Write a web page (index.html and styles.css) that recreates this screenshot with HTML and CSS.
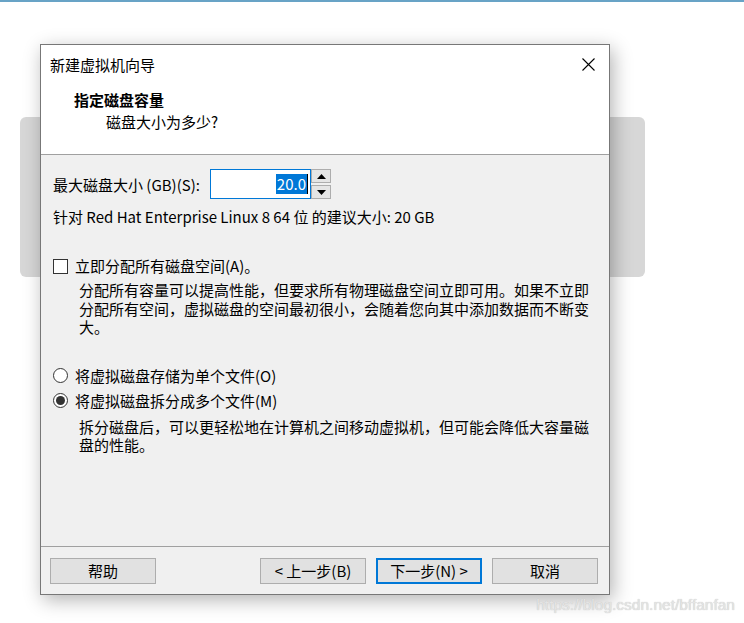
FILE: index.html
```html
<!DOCTYPE html>
<html lang="zh-CN">
<head>
  <meta charset="UTF-8">
  <title>新建虚拟机向导</title>
  <link rel="stylesheet" href="styles.css">
</head>
<body>

<div class="topline"></div>

<div class="stage">
  <div class="backdrop"></div>

  <div class="dialog">
    <div class="titlebar">
      <span>新建虚拟机向导</span>
      <svg class="close" width="13" height="13" viewBox="0 0 13 13">
        <path d="M0.5 0.5 L12.5 12.5 M12.5 0.5 L0.5 12.5" stroke="#000" stroke-width="1.1" fill="none"/>
      </svg>
    </div>

    <div class="header">
      <div class="header-title">指定磁盘容量</div>
      <div class="header-sub">磁盘大小为多少?</div>
    </div>

    <div class="content">
      <div class="size-row">
        <label>最大磁盘大小 (GB)(S):</label>
        <div class="spin">
          <div class="spin-input"><span class="sel">20.0</span><span class="caret"></span></div>
          <div class="spin-btns">
            <div class="spin-btn">
              <svg width="9" height="5" viewBox="0 0 9 5"><path d="M4.5 0 L9 5 L0 5 Z" fill="#000"/></svg>
            </div>
            <div class="spin-btn">
              <svg width="9" height="5" viewBox="0 0 9 5"><path d="M0 0 L9 0 L4.5 5 Z" fill="#000"/></svg>
            </div>
          </div>
        </div>
      </div>

      <p class="recommend">针对 Red Hat Enterprise Linux 8 64 位 的建议大小: 20 GB</p>

      <div class="option check-row">
        <span class="checkbox"></span>
        <span>立即分配所有磁盘空间(A)。</span>
      </div>
      <p class="desc">分配所有容量可以提高性能，但要求所有物理磁盘空间立即可用。如果不立即分配所有空间，虚拟磁盘的空间最初很小，会随着您向其中添加数据而不断变大。</p>

      <div class="option radio-first">
        <span class="radio"></span>
        <span>将虚拟磁盘存储为单个文件(O)</span>
      </div>
      <div class="option radio-second">
        <span class="radio checked"></span>
        <span>将虚拟磁盘拆分成多个文件(M)</span>
      </div>
      <p class="desc desc-split">拆分磁盘后，可以更轻松地在计算机之间移动虚拟机，但可能会降低大容量磁盘的性能。</p>
    </div>

    <div class="footer">
      <button class="btn">帮助</button>
      <div class="footer-right">
        <button class="btn">&lt; 上一步(B)</button>
        <button class="btn btn-default">下一步(N) &gt;</button>
        <button class="btn">取消</button>
      </div>
    </div>
  </div>
</div>

<div class="watermark">https://blog.csdn.net/bffanfan</div>

</body>
</html>
```

FILE: styles.css
```css
body {
  margin: 0;
  background-color: #fff;
  font-family: "Noto Sans CJK SC", "Noto Sans", sans-serif;
  font-size: 15px;
  color: #000;
  height: 623px;
  overflow: hidden;
  position: relative;
}

.topline {
  height: 2px;
  background-color: #68a3c6;
}

.stage {
  position: relative;
  padding-top: 42px;
  padding-left: 40px;
}

/* grey panel sitting behind the dialog */
.backdrop {
  position: absolute;
  left: 20px;
  top: 115px;
  width: 625px;
  height: 160px;
  border-radius: 6px;
  background-color: #d7d7d7;
}

.dialog {
  position: relative;
  width: 570px;
  height: 551px;
  box-sizing: border-box;
  border: 1px solid #777;
  background-color: #f0f0f0;
  box-shadow: 3px 5px 18px rgba(0, 0, 0, 0.3);
  display: flex;
  flex-direction: column;
}

.titlebar {
  height: 38px;
  background-color: #fff;
  display: flex;
  align-items: center;
  justify-content: space-between;
  padding: 0 14px 0 9px;
}

.header {
  box-sizing: border-box;
  background-color: #fff;
  border-bottom: 1px solid #a0a0a0;
  height: 72px;
  padding: 7px 0 0 33px;
}

.header-title {
  font-weight: bold;
  line-height: 20px;
}

.header-sub {
  line-height: 20px;
  margin-top: 2px;
  padding-left: 32px;
}

.content {
  height: 391px;
  box-sizing: border-box;
  padding: 14px 0 0 12px;
}

.size-row {
  display: flex;
  align-items: center;
  height: 30px;
}

.size-row label {
  width: 157px;
}

.spin {
  display: flex;
  height: 30px;
}

.spin-input {
  width: 101px;
  box-sizing: border-box;
  border: 1px solid #0078d7;
  background-color: #fff;
  display: flex;
  justify-content: flex-end;
  align-items: center;
  padding-right: 2px;
}

.sel {
  background-color: #0078d7;
  color: #fff;
  line-height: 20px;
  padding: 0 1px;
}

.caret {
  width: 1px;
  height: 20px;
  background-color: #000;
}

.spin-btns {
  width: 20px;
  display: flex;
  flex-direction: column;
  gap: 2px;
}

.spin-btn {
  flex: 1;
  border: 1px solid #adadad;
  background-color: #e5e5e5;
  display: flex;
  justify-content: center;
  align-items: center;
}

.recommend {
  margin: 8px 0 0;
  line-height: 20px;
}

.option {
  display: flex;
  align-items: center;
  gap: 7px;
  line-height: 20px;
}

.check-row {
  margin-top: 29px;
}

.radio-first {
  margin-top: 29px;
}

.radio-second {
  margin-top: 5px;
}

.checkbox {
  width: 15px;
  height: 15px;
  box-sizing: border-box;
  border: 1px solid #333;
  background-color: #fff;
}

.radio {
  width: 15px;
  height: 15px;
  box-sizing: border-box;
  border: 1px solid #333;
  border-radius: 50%;
  background-color: #fff;
  display: flex;
  justify-content: center;
  align-items: center;
}

.radio.checked::after {
  content: "";
  width: 9px;
  height: 9px;
  border-radius: 50%;
  background-color: #333;
}

.desc {
  margin: 5px 0 0 26px;
  width: 512px;
  line-height: 18.5px;
}

.desc-split {
  margin-top: 7px;
}

.footer {
  flex: 1;
  border-top: 1px solid #a0a0a0;
  display: flex;
  justify-content: space-between;
  align-items: flex-start;
  padding: 11px 11px 0 9px;
}

.footer-right {
  display: flex;
  gap: 10px;
}

.btn {
  width: 106px;
  height: 26px;
  box-sizing: border-box;
  border: 1px solid #adadad;
  background-color: #e1e1e1;
  font-family: inherit;
  font-size: 15px;
  color: #000;
  padding: 0;
  line-height: 22px;
}

.btn-default {
  border: 2px solid #0078d7;
}

.watermark {
  position: absolute;
  right: 9px;
  bottom: 9px;
  font-family: "Liberation Sans", Arial, sans-serif;
  font-size: 15.5px;
  color: #e4e4e4;
  text-shadow: 0 0 1px #bbb;
}
```
